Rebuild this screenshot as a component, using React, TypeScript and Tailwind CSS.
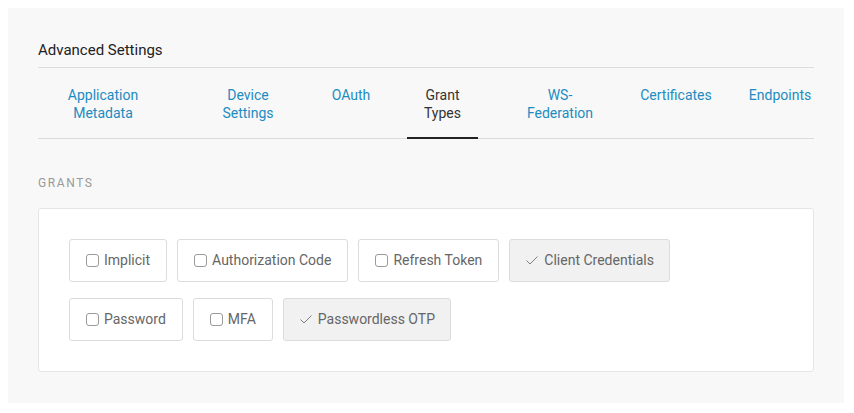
import React from "react";

type Tab = { lines: string[]; width: number; ml: number; active?: boolean };

const TABS: Tab[] = [
  { lines: ["Application", "Metadata"], width: 80, ml: 25 },
  { lines: ["Device", "Settings"], width: 80, ml: 65 },
  { lines: ["OAuth"], width: 80, ml: 23 },
  { lines: ["Grant", "Types"], width: 71, ml: 16, active: true },
  { lines: ["WS-", "Federation"], width: 80, ml: 42 },
  { lines: ["Certificates"], width: 80, ml: 36 },
  { lines: ["Endpoints"], width: 70, ml: 29 },
];

const ROWS: { label: string; checked: boolean }[][] = [
  [
    { label: "Implicit", checked: false },
    { label: "Authorization Code", checked: false },
    { label: "Refresh Token", checked: false },
    { label: "Client Credentials", checked: true },
  ],
  [
    { label: "Password", checked: false },
    { label: "MFA", checked: false },
    { label: "Passwordless OTP", checked: true },
  ],
];

function CheckMark() {
  return (
    <svg width="12" height="9" viewBox="0 0 12 9" fill="none" className="shrink-0">
      <path d="M0.5 4.5 L4 8 L11.5 0.5" stroke="#808080" strokeWidth="1" />
    </svg>
  );
}

function GrantButton({ label, checked }: { label: string; checked: boolean }) {
  return (
    <button
      type="button"
      className={
        checked
          ? "flex h-[43px] items-center gap-[6px] rounded-[3px] border border-[#dcdcdc] bg-[#f1f1f1] pl-[16px] pr-[15px] text-[14px] text-[#666]"
          : "flex h-[43px] items-center gap-[5px] rounded-[3px] border border-[#dcdcdc] bg-white pl-[16px] pr-[16px] text-[14px] text-[#666]"
      }
    >
      {checked ? (
        <CheckMark />
      ) : (
        <span className="block h-[13px] w-[13px] shrink-0 rounded-[3px] border border-[#9a9a9a] bg-white" />
      )}
      <span>{label}</span>
    </button>
  );
}

export default function App() {
  return (
    <div
      className="min-h-screen bg-white pt-2 pl-2 pr-[10px]"
      style={{ fontFamily: "Roboto, 'Liberation Sans', sans-serif" }}
    >
      <div className="bg-[#f8f8f8] px-[30px] pt-[32px] pb-[31px]">
        {/* Header */}
        <div className="border-b border-[#dcdcdc] pb-[7px] text-[15px] leading-[20px] text-[#222]">
          Advanced Settings
        </div>

        {/* Tabs */}
        <div className="flex border-b border-[#dcdcdc]">
          {TABS.map((tab) => (
            <div
              key={tab.lines.join(" ")}
              style={{ width: tab.width, marginLeft: tab.ml }}
              className={
                tab.active
                  ? "-mb-px h-[71px] shrink-0 border-b-2 border-[#222] pt-[18px] text-center text-[14px] leading-[18px] text-[#333]"
                  : "-mb-px h-[71px] shrink-0 pt-[18px] text-center text-[14px] leading-[18px] text-[#1c8cc1] whitespace-nowrap"
              }
            >
              {tab.lines.map((l) => (
                <div key={l}>{l}</div>
              ))}
            </div>
          ))}
        </div>

        {/* Grants */}
        <div className="mt-[36px] text-[12px] leading-[16px] tracking-[1.6px] text-[#999]">GRANTS</div>
        <div className="mt-[17px] rounded-[3px] border border-[#e6e6e6] bg-white p-[30px]">
          <div className="flex flex-col gap-[16px]">
            {ROWS.map((row, i) => (
              <div key={i} className="flex gap-[10px]">
                {row.map((g) => (
                  <GrantButton key={g.label} label={g.label} checked={g.checked} />
                ))}
              </div>
            ))}
          </div>
        </div>
      </div>
    </div>
  );
}
